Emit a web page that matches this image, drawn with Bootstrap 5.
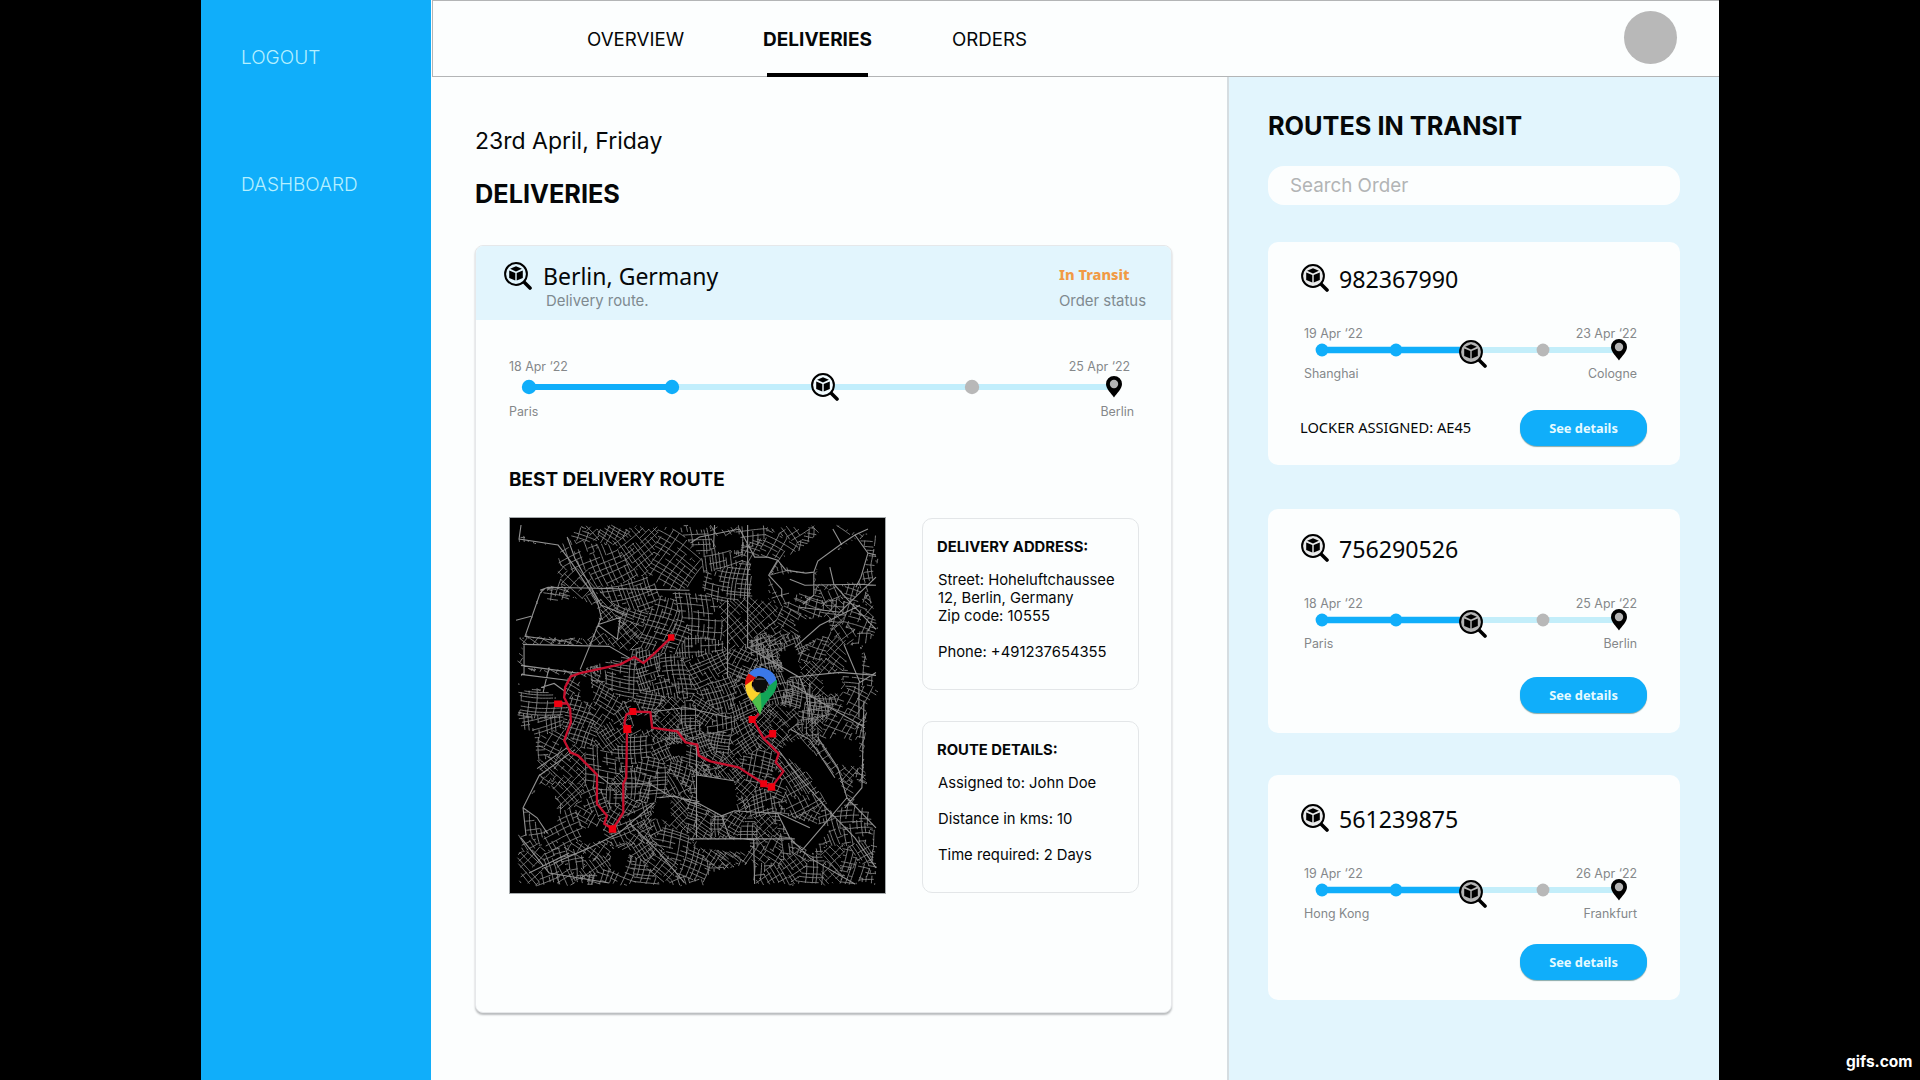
<!DOCTYPE html>
<html lang="en">
<head>
<meta charset="utf-8">
<title>Deliveries</title>
<link href="https://cdn.jsdelivr.net/npm/bootstrap@5.3.0/dist/css/bootstrap.min.css" rel="stylesheet">
<style>
body{background:#000;color:#050708;font-family:Inter,"Liberation Sans",sans-serif;overflow:hidden}
.stage{width:1518px;height:1080px;margin-left:201px;background:#fcfefe}
.side-nav{width:230px;background:#10aefa;padding:45px 0 0 40px}
.side-nav a{color:#b5f0ff;font-size:19px;line-height:26px;display:block;font-weight:300;text-decoration:none}
.side-nav a + a{margin-top:101px}
.content{padding-left:1px}
.topbar{height:77px;border:1px solid #b3b5b6;border-right:0;padding:0 43px 0 154px}
.topbar .nav{gap:80px}
.topbar .nav-link{color:#050708;font-size:18.7px;line-height:75px;height:76px;padding:1px 0 0;position:relative}
.topbar .nav-link.active{font-weight:700;font-size:19px;margin-left:-1px}
.topbar .nav-link.active::after{content:"";position:absolute;left:4px;right:4px;bottom:0;height:4px;background:#000}
.avatar{width:53px;height:53px;background:#b8b8b8;margin-top:10px}
.main-col{width:795px;padding:50px 0 0 43px}
.day{font-size:23px;line-height:28px}
.h-title{font-size:25.3px;line-height:30px;font-weight:700;margin:0}
.day + .h-title{margin-top:24px}
.order{width:697px;height:768px;border:1px solid #e6e8ea;border-radius:8px;box-shadow:0 2px 2px #b9bcbe;background:#fcfefe;margin-top:36px;overflow:hidden}
.order-head{height:75px;background:#e2f5fd;color:#050708;margin:-1px -1px 0;padding:17px 26px 0 29px}
.order-head .lens{color:#e2f5fd;margin-right:11px}
.noto{font-family:"Noto Sans","Open Sans",sans-serif}
.place{font-size:23px;line-height:28px}
.sub-note{font-size:14.9px;line-height:20px;color:#7f8a90}
.place + .sub-note{margin:1px 0 0 3px}
.status{font-size:14.6px;line-height:20px;font-weight:800;color:#f19a45;margin:2px 0 7px}
.order-body{padding:37px 34px 0 33px}
.stamp{font-size:12.4px;line-height:20px;color:#85888a}
.order-body .stamp{padding-right:3px}
.order-body .stamp.on-top{padding-right:7px}
.track{display:block;margin-top:-5px;color:#f2fcff}
.h-sub{font-size:18.95px;line-height:24px;font-weight:700;margin:46px 0 25px}
.map{width:377px;height:377px;background:#000;display:block;outline:1px solid #a5aaac;outline-offset:-1px}
.infos{padding:1px 0 0 36px;gap:31px}
.info{width:217px;height:172px;border:1px solid #e3e6e8;border-radius:10px;padding:19px 0 0 14px;font-size:14.8px;line-height:18px}
.info h3{font-size:14.8px;line-height:18px;font-weight:700;margin:0 0 15px}
.info p{margin:0 -8px 18px 1px}
.routes{width:493px;flex-shrink:0;background:#e2f5fd;border-left:2px solid #d5dde1;padding:34px 0 0 39px}
.search{width:412px;height:39px;border:0;border-radius:16px;background:#fcfefe;margin:25px 0 37px;padding:0 22px;font-size:18.8px;color:#999}
.search::placeholder{color:#b2b4b5;opacity:1}
.route{width:412px;height:223px;border-radius:10px;background:#fcfefe;padding:22px 33px 19px;margin-bottom:44px}
.route.r2{height:224px;padding-top:25px;padding-bottom:20px;margin-bottom:42px}
.route.r3{height:225px;padding-top:29px;padding-bottom:20px}
.route-head{height:28px}
.route-head .lens{color:#e9eaea;margin-right:10px}
.code{font-size:23.2px;line-height:30px}
.trip{margin:32px 10px 0 3px}
.trip .track{margin:-9px 0 -5px;color:#b4b4b4;position:relative}
.btn-see{width:127px;height:36px;border-radius:17px;background:#10aefa;color:#e6fbff;font-weight:700;font-size:12.8px;line-height:36px;padding:0;border:0;box-shadow:0 1px 1px #8aa}
.locker{font-size:14.65px;line-height:35px;margin-left:-1px}
.credit{position:absolute;left:1846px;top:1050px;font-size:15.5px;line-height:24px;font-weight:700;color:#fff}
svg{overflow:visible;flex-shrink:0}
</style>
<script src="https://cdn.jsdelivr.net/npm/bootstrap@5.3.0/dist/js/bootstrap.bundle.min.js"></script>
</head>
<body>
<svg width="0" height="0" class="position-absolute">
  <symbol id="lens" viewBox="0 0 28 28">
    <path d="M19.5 19.5 26 26" stroke="#000" stroke-width="3.6" stroke-linecap="round"/>
    <circle cx="12" cy="12" r="10.9" fill="currentColor" stroke="#000" stroke-width="2"/>
    <path d="M12 4.3 17.9 6.8 12 9.5 6.1 6.8zM5.2 8.4 11.3 11.1V18.6L5.2 15.9zM18.8 8.4 12.7 11.1V18.6L18.8 15.9z" fill="#000"/>
  </symbol>
  <symbol id="pin" viewBox="0 0 16 22">
    <path d="M8 0A8 8 0 0 0 0 8C0 13 5 17 8 21.500C11 17 16 13 16 8A8 8 0 0 0 8 0z" fill="#000"/><circle cx="8" cy="8" r="4.200" fill="#b4b4b4"/>
  </symbol>
</svg>
<div class="stage d-flex overflow-hidden">
  <nav class="side-nav flex-shrink-0">
    <a href="#">LOGOUT</a>
    <a href="#">DASHBOARD</a>
  </nav>
  <div class="content d-flex flex-column flex-grow-1">
    <header class="topbar d-flex">
      <nav class="nav">
        <a class="nav-link" href="#">OVERVIEW</a>
        <a class="nav-link active" href="#">DELIVERIES</a>
        <a class="nav-link" href="#">ORDERS</a>
      </nav>
      <div class="avatar rounded-circle ms-auto"></div>
    </header>
    <div class="d-flex flex-grow-1">
      <main class="main-col flex-shrink-0">
        <div class="day">23rd April, Friday</div>
        <h1 class="h-title">DELIVERIES</h1>
        <section class="order">
          <div class="order-head d-flex">
            <svg class="lens" width="28" height="28"><use href="#lens"/></svg>
            <div>
              <div class="place noto">Berlin, Germany</div>
              <div class="sub-note">Delivery route.</div>
            </div>
            <div class="ms-auto">
              <div class="status noto">In Transit</div>
              <div class="sub-note">Order status</div>
            </div>
          </div>
          <div class="order-body">
            <div class="d-flex justify-content-between stamp on-top"><span>18 Apr ‘22</span><span>25 Apr ‘22</span></div>
            <svg class="track" width="626" height="30">
              <path d="M163 15H605" stroke="#c1eefc" stroke-width="6"/><path d="M20 15H163" stroke="#10aefa" stroke-width="6"/>
              <circle cx="20" cy="15" r="7.200" fill="#10aefa"/><circle cx="163" cy="15" r="7.200" fill="#10aefa"/><circle cx="463" cy="15" r="7.200" fill="#b8b8b8"/>
              <use href="#lens" x="302" y="1" width="28" height="28"/><use href="#pin" x="597" y="4" width="16" height="22"/>
            </svg>
            <div class="d-flex justify-content-between stamp"><span>Paris</span><span>Berlin</span></div>
            <h2 class="h-sub">BEST DELIVERY ROUTE</h2>
            <div class="d-flex">
              <svg class="map" viewBox="0 0 376 376">
                <g fill="none"><path id="streets" stroke="#8a8a8a" stroke-width=".9"/><path id="avenues" stroke="#929292" stroke-width="1.100"/></g>
                <path fill="none" stroke="#c8102e" stroke-width="2.300" stroke-linejoin="round" d="M161.700 120L144 137 134 145.700 125 139.700 111 147 71 155.700 61.700 159 56 169.700 55 180 58.700 187 61 191 61.700 204.700 55 223 61 234.700 69 238 87.700 257V286L97.700 298 95 306 103 311 107.700 304.700 114 294.700V266L117 259.700 117.700 211 115 206 117 197 123.300 194 141 194.700 142.700 210 167.700 213.700 176 224.700 187.700 227 189.300 238 201 243.700 229 249.700 254 266 261.700 269.700 273.700 253.700 266 244.700 269 236 254 221 244 203 249 196M49 186H59M254 221L263 216"/>
                <path fill="#f00010" d="M158.500 117h6.500v6.500h-6.500zM45 183h8v6.500h-8zM120 190.500h7v7h-7zM114 207.500h8v8h-8zM99.500 307.500h7.500v7.500h-7.500zM250.500 262.500h7v7h-7zM258 265.500h7.500v7.500h-7.500zM259.500 212.500h7v7.500h-7zM239 198.500h7v7h-7z"/>
                <g>
                  <path fill="#3b78e7" d="M239 156A16 16 0 0 1 267 164L262 170 256.500 163A7.500 7.500 0 0 0 243.500 162z"/>
                  <path fill="#e0100c" d="M239 156L246 160 237 173Q233 164 239 156z"/>
                  <path fill="#fbd22b" d="M235.500 168L244 162A8 8 0 0 0 251 175L242.500 184Q236 177 235.500 168z"/>
                  <path fill="#12a557" d="M267 162Q269 172 259 182 252 190 250.500 197 247 189 242.500 184L251 175.500A8 8 0 0 0 258.500 169z"/>
                  <path fill="#4fbf4a" d="M242.500 184L251 175.500 252 192 250.500 197Q247 189 242.500 184z"/>
                  <circle cx="250.500" cy="167" r="7.300" fill="#0c0c0c"/><path d="M245 162.500q5-4 11 0z" fill="#444"/>
                </g>
              </svg>
              <div class="infos d-flex flex-column">
                <div class="info"><h3>DELIVERY ADDRESS:</h3><p>Street: Hoheluftchaussee<br>12, Berlin, Germany<br>Zip code: 10555</p><p>Phone: +491237654355</p></div>
                <div class="info"><h3>ROUTE DETAILS:</h3><p>Assigned to: John Doe</p><p>Distance in kms: 10</p><p>Time required: 2 Days</p></div>
              </div>
            </div>
          </div>
        </section>
      </main>
      <aside class="routes">
        <h2 class="h-title">ROUTES IN TRANSIT</h2>
        <input class="search d-block" placeholder="Search Order">
        <div id="routes"></div>
      </aside>
    </div>
  </div>
</div>
<div class="credit">gifs.com</div>
<script>
// In-transit order cards
document.getElementById('routes').innerHTML=[
 ['982367990','19 Apr ‘22','23 Apr ‘22','Shanghai','Cologne','LOCKER ASSIGNED: AE45'],
 ['756290526','18 Apr ‘22','25 Apr ‘22','Paris','Berlin',''],
 ['561239875','19 Apr ‘22','26 Apr ‘22','Hong Kong','Frankfurt','']
].map((r,i)=>`<div class="route d-flex flex-column r${i+1}">
 <div class="route-head d-flex"><svg class="lens" width="28" height="28"><use href="#lens"/></svg><span class="code noto">${r[0]}</span></div>
 <div class="trip">
  <div class="d-flex justify-content-between stamp"><span>${r[1]}</span><span>${r[2]}</span></div>
  <svg class="track" width="333" height="34">
   <path d="M155 15H315" stroke="#c3eefa" stroke-width="6"/><path d="M18 15H158" stroke="#10aefa" stroke-width="6.500"/>
   <circle cx="18" cy="15" r="6.400" fill="#10aefa"/><circle cx="92" cy="15" r="6.400" fill="#10aefa"/><circle cx="239" cy="15" r="6.400" fill="#b8b8b8"/>
   <use href="#lens" x="155" y="5" width="28" height="28"/><use href="#pin" x="307" y="4" width="16" height="22"/>
  </svg>
  <div class="d-flex justify-content-between stamp"><span>${r[3]}</span><span>${r[4]}</span></div>
 </div>
 <div class="d-flex justify-content-between mt-auto"><span class="locker noto">${r[5]}</span><button class="btn btn-see noto">See details</button></div>
</div>`).join('');

// Street network: blocks of rotated grids around random sites, leaving parks and fields empty
(()=>{
 let s=77;const rnd=()=>((s=(s*1664525+1013904223)>>>0)/4294967296);
 const voids=['0,25 50,28 48,66 31,73 16,120 0,120','33,74 38,84 71,81 91,93 88,108 79,121 18,119','91,105 109,101 108,122 89,113','14,127 101,128 120,137 68,153 14,150','16,153 58,158 54,183 31,170 8,175','71,160 81,160 84,184 72,184','0,0 48,0 65,15 50,30 18,22','241,43 261,40 267,43 259,56 258,86 243,80','311,0 344,20 308,46 304,55 281,53 269,43 291,33 309,16','261,58 304,56 304,80 291,76 268,76','308,46 348,21 358,36 351,63 324,68 306,66','355,66 376,60 376,180 366,165 352,130 372,112','284,103 318,100 321,116 294,126','334,127 350,130 352,155 340,160','186,257 224,263 228,293 211,298 188,285','269,233 290,221 328,260 338,283 324,296 298,255 278,240','308,220 348,223 351,250 331,246','358,183 376,183 376,376 372,350 362,300 354,240','268,296 321,310 301,336 278,316','200,355 244,345 244,376 190,376','0,213 24,213 31,263 14,290 17,316 0,318','16,290 32,265 46,273 48,306 34,313','101,330 120,334 114,356 102,350','149,280 161,280 161,303 143,300','123,198 141,198 142,211 125,213','161,227 176,226 176,238 162,238','71,312 93,308 96,322 74,326','310,0 376,0 376,20 345,15','343,262 376,275 376,305 345,285','204,20 230,18 232,32 207,35','270,136 285,130 292,160 276,160','312,155 332,158 330,176 315,176','186,321 240,323 238,335 190,330','62,88 75,98 70,108 60,100']
  .map(v=>v.split(' ').map(p=>p.split(',').map(Number)));
 const inside=(x,y,p)=>{let c=false;for(let i=0,j=p.length-1;i<p.length;j=i++){if((p[i][1]>y)!==(p[j][1]>y)&&x<(p[j][0]-p[i][0])*(y-p[i][1])/(p[j][1]-p[i][1])+p[i][0])c=!c}return c};
 const sites=[];
 for(let i=0;i<230;i++){const x=rnd()*376,y=rnd()*376,d=Math.hypot(x-195,y-205)/190;sites.push({x,y,a:rnd()*1.570,g:2.500+d*1.300+rnd()*2,h:3.300+d*1.800+rnd()*3})}
 const ok=(x,y,k)=>{const wx=x+2*Math.sin(y/13),wy=y+2*Math.sin(x/15);if(wx<8+4*Math.sin(y/9)**2||wx>368-4*Math.sin(y/7)**2||wy<8+4*Math.sin(x/8)**2||wy>368-3*Math.sin(x/9)**2)return false;
  const d=(x-sites[k].x)**2+(y-sites[k].y)**2;for(let i=0;i<sites.length;i++)if(i!==k&&(x-sites[i].x)**2+(y-sites[i].y)**2<d-44)return false;
  return !voids.some(v=>inside(wx,wy,v))};
 let d='';
 sites.forEach((t,k)=>{for(const q of[0,1]){const a=t.a+q*1.570,c=Math.cos(a),n=Math.sin(a),st=q?t.h:t.g;
  for(let o=-32;o<32;o+=st*(.6+rnd()*.8)){let pen=false,skip=0;
   for(let u=-32;u<32;u+=1.500){const x=t.x+c*u-n*o,y=t.y+n*u+c*o;
    if(skip>0){skip--;pen=false;continue}
    if(rnd()<.035)skip=4;
    if(ok(x,y,k)){d+=(pen?'L':'M')+(x+2*Math.sin(y/13)).toFixed(1)+' '+(y+2*Math.sin(x/15)).toFixed(1);pen=true}else pen=false}}}});
 document.getElementById('streets').setAttribute('d',d);
 document.getElementById('avenues').setAttribute('d',['M12 8 10 22 49 28 62 45 88 84 92 100 86 115 71 152','M58 20 66 42 92 88 118 98','M31 73 39 70 180 73','M35 72 31 76 16 119 45 123','M7 103 22 99','M14 127 100 129 124 143','M15 128V158M12 148 70 156M40 150 34 175M12 157 60 163','M32 170 45 166 56 174','M89 108 108 122 111 100 90 107','M205 8 204 30M181 26 190 20 230 12 245 40 258 40 268 43 276 53 296 56 304 55 308 44 330 28 345 18 358 12','M323 12 332 28M345 18 358 36 366 38M358 36 351 60 346 70','M280 62 295 68 350 67 366 68M304 56 304 78 293 87M268 43 259 58 272 72 272 80M320 50 324 67 340 85 366 112','M238 8V130M218 82V160M238 130 290 160 296 175 300 200M290 90 330 95 366 60M285 130 310 108 350 88','M334 127 350 165 366 155M280 160 330 155 366 158M349 165V200','M284 168 320 190 355 210M300 165V195M354 183 352 270 335 290','M269 233 290 260 318 292 345 320 366 350','M308 220 328 250 337 280 366 310','M281 212 300 222 325 260M337 280 320 300 290 335','M186 257 224 263M181 285 188 285 212 298 225 293 270 296 300 310','M181 321 285 321M212 298 220 320 244 322 245 366','M268 296 280 320 300 340 345 366','M187 227V320M150 280 165 278 190 288','M88 257 100 266 140 266 160 278 190 284','M58 230 28 251M66 232 30 258 14 290 28 300 38 315M14 290 17 318','M45 345 80 330 110 315 145 285','M12 320 40 355 100 365M120 305 150 335 175 365M20 355 60 335M145 194 176 190 220 200'].join(''));
})();
</script>
</body>
</html>
